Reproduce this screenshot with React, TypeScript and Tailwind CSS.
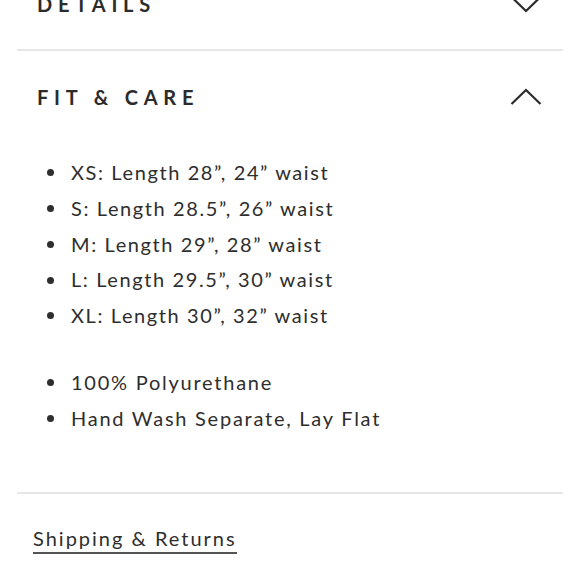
import React from "react";

const sizes = [
  "XS: Length 28\u201D, 24\u201D waist",
  "S: Length 28.5\u201D, 26\u201D waist",
  "M: Length 29\u201D, 28\u201D waist",
  "L: Length 29.5\u201D, 30\u201D waist",
  "XL: Length 30\u201D, 32\u201D waist",
];
const care = ["100% Polyurethane", "Hand Wash Separate, Lay Flat"];

function Chevron({ up }: { up?: boolean }) {
  return (
    <svg width="32" height="18" viewBox="0 0 32 18" fill="none" className="mr-[21px]">
      {up ? (
        <polyline points="1.5,16 16,2 30.5,16" stroke="#2b2b2b" strokeWidth="2.2" />
      ) : (
        <polyline points="1.5,2 16,16 30.5,2" stroke="#2b2b2b" strokeWidth="2.2" />
      )}
    </svg>
  );
}

function Item({ text }: { text: string }) {
  return (
    <li className="flex items-center">
      <span className="ml-[30px] w-[7px] h-[7px] rounded-full bg-[#2e2e2e]" />
      <span className="ml-[17px]">{text}</span>
    </li>
  );
}

export default function App() {
  return (
    <div className="w-[580px] h-[580px] overflow-hidden bg-white text-[#2e2e2e]" style={{ fontFamily: "Lato, 'Open Sans', sans-serif" }}>
      <div className="mx-[17px]">
        <div className="mt-[-41px] h-[92px] flex items-center justify-between border-b-2 border-[#e6e6e6]">
          <span className="ml-[20px] text-[20px] font-bold tracking-[5.8px] text-[#2b2b2b]">DETAILS</span>
          <Chevron />
        </div>
        <div className="h-[92px] flex items-center justify-between">
          <span className="ml-[20px] text-[20px] font-bold tracking-[5.8px] text-[#2b2b2b]">FIT &amp; CARE</span>
          <Chevron up />
        </div>
        <div className="pt-[12px] pb-[56px] border-b-2 border-[#e6e6e6] text-[20px] tracking-[1.6px] leading-[35.75px]">
          <ul>
            {sizes.map((s) => (
              <Item key={s} text={s} />
            ))}
          </ul>
          <ul className="mt-[31px] tracking-[1.75px]">
            {care.map((s) => (
              <Item key={s} text={s} />
            ))}
          </ul>
        </div>
        <div className="pt-[31px]">
          <span className="ml-[16px] inline-block text-[20px] tracking-[2px] leading-[27px] border-b-2 border-[#555]">
            Shipping &amp; Returns
          </span>
        </div>
      </div>
    </div>
  );
}
